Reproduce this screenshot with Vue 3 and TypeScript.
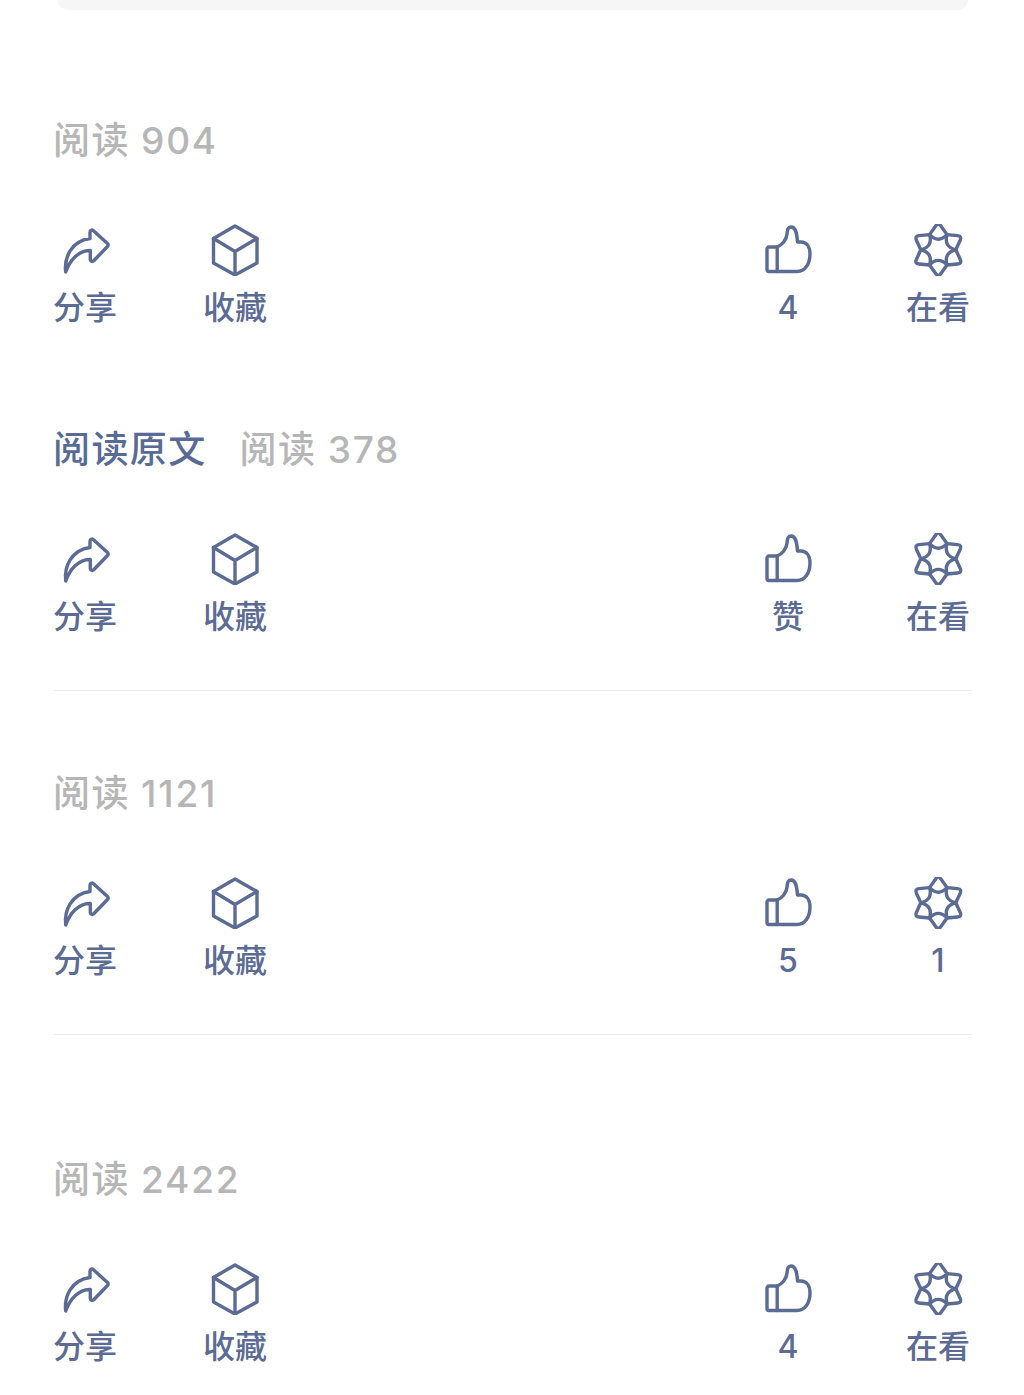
<script setup lang="ts">
type IconName = 'share' | 'cube' | 'thumb' | 'star'

interface Post {
  id: number
  variant: string
  hasLink: boolean
  reads: number
  like: string
  watch: string
}

// 在看圖示：六個菱形尖角圍成一圈
const buildStar = (): string[] => {
  const cx = 26.3
  const cy = 25.8
  const pt = (r: number, deg: number) => {
    const a = (deg * Math.PI) / 180
    return { x: cx + r * Math.sin(a), y: cy - r * Math.cos(a) }
  }
  const f = (p: { x: number; y: number }) => `${p.x.toFixed(2)} ${p.y.toFixed(2)}`
  const t = 0.7
  return [0, 60, 120, 180, 240, 300].map((deg) => {
    const left = pt(17.5, deg - 30)
    const right = pt(17.5, deg + 30)
    const tip = pt(27.5, deg)
    const inner = pt(6, deg)
    const a = { x: left.x + (tip.x - left.x) * t, y: left.y + (tip.y - left.y) * t }
    const b = { x: right.x + (tip.x - right.x) * t, y: right.y + (tip.y - right.y) * t }
    return `M${f(left)}L${f(a)}Q${f(tip)} ${f(b)}L${f(right)}Q${f(inner)} ${f(left)}Z`
  })
}

// 圖示路徑，viewBox 皆為 52x52
const iconPaths: Record<IconName, string[]> = {
  share: [
    'M6.7 48C5 34 12 17 31 14.5V8a2 2 0 0 1 3.2-1.5L48.5 19.5a2 2 0 0 1 0 3L34.5 37a2 2 0 0 1-3.2-1.5V26.5C20 26 11 36 6.7 48Z',
  ],
  cube: [
    'M26 2L48 14.5V39L26 51L4.5 39V14.5Z',
    'M4.5 14.5L26 27.5L48 14.5M26 27.5V51',
  ],
  thumb: [
    'M15.2 23H7a2 2 0 0 0-2 2V45.5a2 2 0 0 0 2 2H35C43 47.5 48 40 48 30C48 22 44 18 39 18H35.5C35 10 34 3 29 3C25.5 3 25.5 6 25 10C24.5 16 20 21 15.2 23Z',
    'M15.2 23V47.5',
  ],
  star: buildStar(),
}

const posts: Post[] = [
  { id: 1, variant: 'first', hasLink: false, reads: 904, like: '4', watch: '在看' },
  { id: 2, variant: 'second', hasLink: true, reads: 378, like: '赞', watch: '在看' },
  { id: 3, variant: 'third', hasLink: false, reads: 1121, like: '5', watch: '1' },
  { id: 4, variant: 'fourth', hasLink: false, reads: 2422, like: '4', watch: '在看' },
]

const leftActions = (): { icon: IconName; label: string }[] => [
  { icon: 'share', label: '分享' },
  { icon: 'cube', label: '收藏' },
]

const rightActions = (post: Post): { icon: IconName; label: string }[] => [
  { icon: 'thumb', label: post.like },
  { icon: 'star', label: post.watch },
]
</script>

<template>
  <div class="page">
    <div class="top-card"></div>

    <section v-for="post in posts" :key="post.id" class="post" :class="post.variant">
      <div class="stats">
        <a v-if="post.hasLink" class="link">阅读原文</a>
        <span class="reads">阅读 <span class="count">{{ post.reads }}</span></span>
      </div>

      <div class="actions">
        <div class="group">
          <div v-for="item in leftActions()" :key="item.icon" class="action">
            <svg class="icon" viewBox="0 0 52 52" width="52" height="52">
              <path v-for="d in iconPaths[item.icon]" :key="d" :d="d" />
            </svg>
            <span class="label">{{ item.label }}</span>
          </div>
        </div>
        <div class="group">
          <div v-for="item in rightActions(post)" :key="item.icon" class="action">
            <svg class="icon" viewBox="0 0 52 52" width="52" height="52">
              <path v-for="d in iconPaths[item.icon]" :key="d" :d="d" />
            </svg>
            <span class="label">{{ item.label }}</span>
          </div>
        </div>
      </div>
    </section>
  </div>
</template>

<style>
body {
  background: #fff;
}
</style>

<style scoped>
.page {
  width: 1024px;
  height: 1395px;
  overflow: hidden;
  box-sizing: border-box;
  padding: 0 52px 0 53px;
  font-family: Inter, "Noto Sans CJK SC", sans-serif;
}
.top-card {
  height: 10px;
  margin: 0 4px 0 5px;
  background: #f6f6f6;
  border-radius: 0 0 12px 12px;
}
.post.first {
  padding-top: 108px;
}
.post.second {
  padding-top: 104px;
  padding-bottom: 58px;
  border-bottom: 1px solid #ededed;
}
.post.third {
  padding-top: 80px;
  padding-bottom: 58px;
  border-bottom: 1px solid #ededed;
}
.post.fourth {
  padding-top: 122px;
}
.stats {
  display: flex;
  align-items: center;
  gap: 33px;
  height: 40px;
  margin-bottom: 66px;
  font-size: 37px;
  font-weight: 500;
  letter-spacing: 1.4px;
  white-space: nowrap;
}
.link {
  color: #576b95;
}
.reads {
  color: #b6b6b6;
}
.count {
  letter-spacing: 1.8px;
}
.actions {
  display: flex;
  justify-content: space-between;
  padding: 0 3px 0 1px;
}
.group {
  display: flex;
  gap: 88px;
}
.action {
  display: flex;
  flex-direction: column;
  align-items: center;
  width: 62px;
}
.icon {
  display: block;
  margin-bottom: 17px;
  fill: none;
  stroke: #5b6b93;
  stroke-width: 3.4;
  stroke-linejoin: round;
  stroke-linecap: round;
}
.label {
  height: 30px;
  line-height: 30px;
  font-size: 32px;
  font-weight: 500;
  color: #5b6b93;
  white-space: nowrap;
}
</style>
